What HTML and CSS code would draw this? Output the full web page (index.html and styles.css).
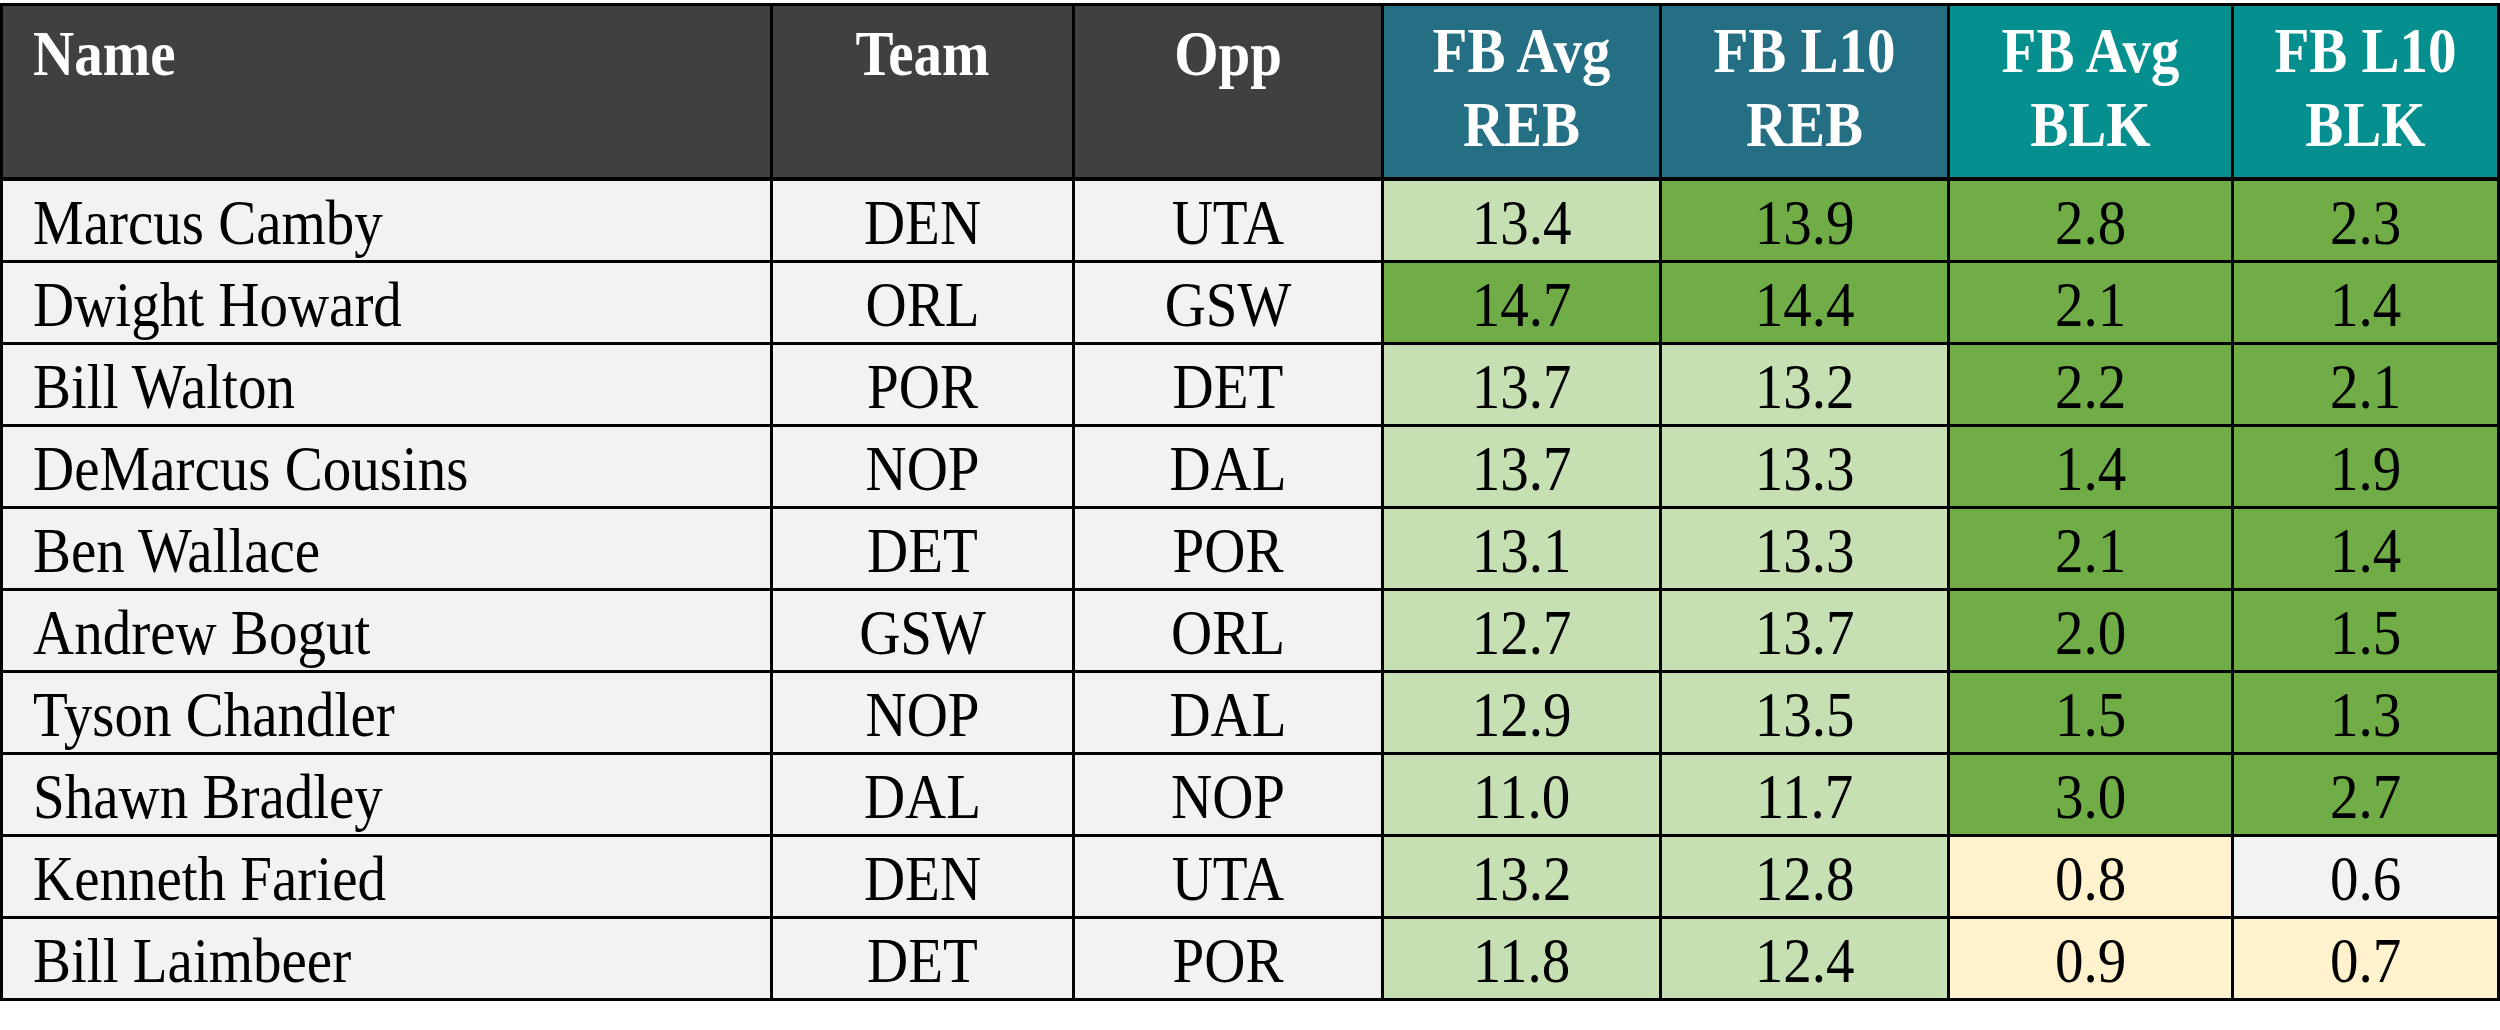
FILE: index.html
```html
<!DOCTYPE html>
<html>
<head>
<meta charset="utf-8">
<link rel="stylesheet" href="styles.css">
</head>
<body>
<table class="stats">
  <colgroup>
    <col class="c-name"><col class="c-team"><col class="c-opp"><col class="c-s1"><col class="c-s2"><col class="c-s3"><col class="c-s4">
  </colgroup>
  <thead>
    <tr>
      <th class="h-dark left"><span class="t">Name</span></th>
      <th class="h-dark"><span class="t">Team</span></th>
      <th class="h-dark"><span class="t">Opp</span></th>
      <th class="h-reb"><span class="t">FB Avg<br>REB</span></th>
      <th class="h-reb"><span class="t">FB L10<br>REB</span></th>
      <th class="h-blk"><span class="t">FB Avg<br>BLK</span></th>
      <th class="h-blk"><span class="t">FB L10<br>BLK</span></th>
    </tr>
  </thead>
  <tbody>
    <tr><td class="left"><span class="t">Marcus Camby</span></td><td><span class="t">DEN</span></td><td><span class="t">UTA</span></td><td class="lg"><span class="t">13.4</span></td><td class="dg"><span class="t">13.9</span></td><td class="dg"><span class="t">2.8</span></td><td class="dg"><span class="t">2.3</span></td></tr>
    <tr><td class="left"><span class="t">Dwight Howard</span></td><td><span class="t">ORL</span></td><td><span class="t">GSW</span></td><td class="dg"><span class="t">14.7</span></td><td class="dg"><span class="t">14.4</span></td><td class="dg"><span class="t">2.1</span></td><td class="dg"><span class="t">1.4</span></td></tr>
    <tr><td class="left"><span class="t">Bill Walton</span></td><td><span class="t">POR</span></td><td><span class="t">DET</span></td><td class="lg"><span class="t">13.7</span></td><td class="lg"><span class="t">13.2</span></td><td class="dg"><span class="t">2.2</span></td><td class="dg"><span class="t">2.1</span></td></tr>
    <tr><td class="left"><span class="t">DeMarcus Cousins</span></td><td><span class="t">NOP</span></td><td><span class="t">DAL</span></td><td class="lg"><span class="t">13.7</span></td><td class="lg"><span class="t">13.3</span></td><td class="dg"><span class="t">1.4</span></td><td class="dg"><span class="t">1.9</span></td></tr>
    <tr><td class="left"><span class="t">Ben Wallace</span></td><td><span class="t">DET</span></td><td><span class="t">POR</span></td><td class="lg"><span class="t">13.1</span></td><td class="lg"><span class="t">13.3</span></td><td class="dg"><span class="t">2.1</span></td><td class="dg"><span class="t">1.4</span></td></tr>
    <tr><td class="left"><span class="t">Andrew Bogut</span></td><td><span class="t">GSW</span></td><td><span class="t">ORL</span></td><td class="lg"><span class="t">12.7</span></td><td class="lg"><span class="t">13.7</span></td><td class="dg"><span class="t">2.0</span></td><td class="dg"><span class="t">1.5</span></td></tr>
    <tr><td class="left"><span class="t">Tyson Chandler</span></td><td><span class="t">NOP</span></td><td><span class="t">DAL</span></td><td class="lg"><span class="t">12.9</span></td><td class="lg"><span class="t">13.5</span></td><td class="dg"><span class="t">1.5</span></td><td class="dg"><span class="t">1.3</span></td></tr>
    <tr><td class="left"><span class="t">Shawn Bradley</span></td><td><span class="t">DAL</span></td><td><span class="t">NOP</span></td><td class="lg"><span class="t">11.0</span></td><td class="lg"><span class="t">11.7</span></td><td class="dg"><span class="t">3.0</span></td><td class="dg"><span class="t">2.7</span></td></tr>
    <tr><td class="left"><span class="t">Kenneth Faried</span></td><td><span class="t">DEN</span></td><td><span class="t">UTA</span></td><td class="lg"><span class="t">13.2</span></td><td class="lg"><span class="t">12.8</span></td><td class="yl"><span class="t">0.8</span></td><td><span class="t">0.6</span></td></tr>
    <tr><td class="left"><span class="t">Bill Laimbeer</span></td><td><span class="t">DET</span></td><td><span class="t">POR</span></td><td class="lg"><span class="t">11.8</span></td><td class="lg"><span class="t">12.4</span></td><td class="yl"><span class="t">0.9</span></td><td class="yl"><span class="t">0.7</span></td></tr>
  </tbody>
</table>
</body>
</html>
```

FILE: styles.css
```css
html, body {
  margin: 0;
  padding: 0;
  background: #ffffff;
}
body {
  padding-top: 3px;
  font-family: "Liberation Serif", "Times New Roman", serif;
}
.stats {
  border-collapse: collapse;
  table-layout: fixed;
  width: 2497px;
}
.c-name { width: 770px; }
.c-team { width: 302px; }
.c-opp { width: 309px; }
.c-s1 { width: 278px; }
.c-s2 { width: 288px; }
.c-s3 { width: 284px; }
.c-s4 { width: 266px; }

.stats th, .stats td {
  border: 3px solid #000;
  text-align: center;
  padding: 0;
}
.t {
  display: inline-block;
  transform: scaleY(1.1);
}
.stats th {
  height: 157px;
  vertical-align: top;
  color: #fff;
  font-weight: bold;
  font-size: 57px;
  line-height: 68px;
  padding-top: 14px;
  border-bottom-width: 4px;
}
.stats th.left, .stats td.left {
  text-align: left;
  padding-left: 30px;
}
.stats th.left .t, .stats td.left .t {
  transform-origin: left center;
}
.h-dark { background: #404040; }
.h-reb { background: #246f83; }
.h-blk { background: #068f8f; }

.stats td {
  height: 75px;
  background: #f2f2f2;
  color: #000;
  font-size: 57px;
  line-height: 60px;
  vertical-align: middle;
  padding-top: 4px;
}
.stats td.lg { background: #c6e0b4; }
.stats td.dg { background: #70ad47; }
.stats td.yl { background: #fff2cc; }
```
